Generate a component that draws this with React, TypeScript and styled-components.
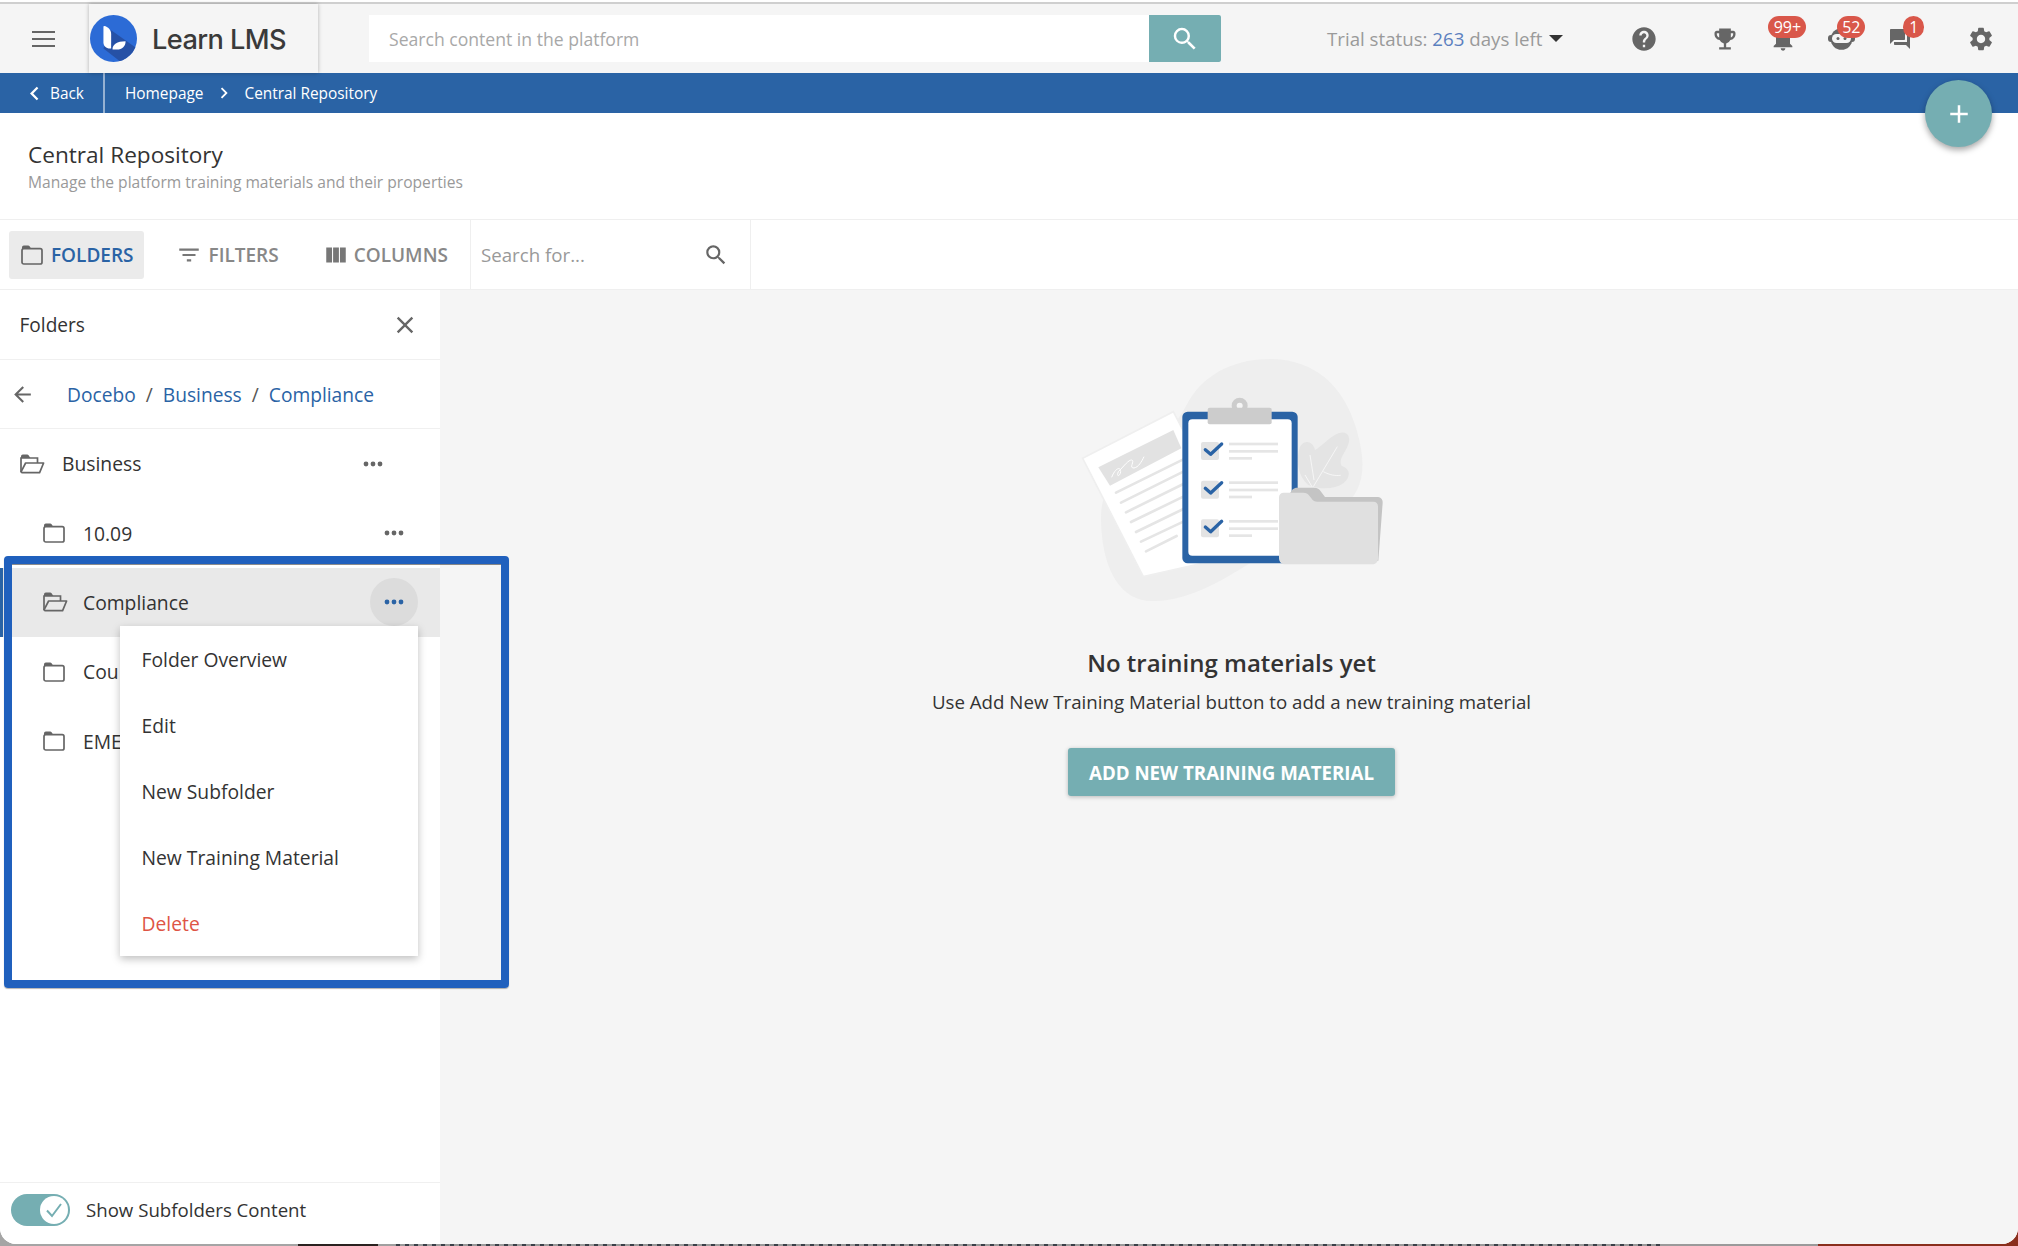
import React from "react";
import styled, { createGlobalStyle } from "styled-components";
import {
  MdHelp,
  MdEmojiEvents,
  MdNotifications,
  MdQuestionAnswer,
  MdSettings,
  MdSearch,
  MdFilterList,
  MdViewColumn,
  MdClose,
  MdArrowBack,
  MdAdd,
  MdChevronLeft,
  MdChevronRight,
} from "react-icons/md";

const BLUE = "#2a63a5";
const TEAL = "#75aeb2";
const INK = "#333333";
const ICON = "#666666";

const Global = createGlobalStyle`
  html, body { margin: 0; padding: 0; background: #fff; }
  * { box-sizing: border-box; }
  body { font-family: "Open Sans", "Liberation Sans", sans-serif; color: ${INK}; }
`;

const Root = styled.div`
  position: relative;
  width: 2018px;
  height: 1246px;
  overflow: hidden;
  background:
    linear-gradient(90deg, #a5a5a5 0 298px, #2a2220 298px 378px, #a0a0a0 378px 395px, transparent 395px 1660px, #9a9a9a 1660px 1818px, #8a2e1c 1818px),
    repeating-linear-gradient(90deg, #3a4048 0 4px, #9a9a9a 4px 9px);
`;

const Main = styled.div`
  position: relative;
  height: 1244px;
  display: flex;
  flex-direction: column;
  background: #fff;
  border-radius: 0 0 16px 16px;
  overflow: hidden;
  padding-top: 2px;
`;

const TopRule = styled.div`
  flex: none;
  height: 2px;
  background: #cfcfcf;
`;

const Header = styled.header`
  flex: none;
  height: 69px;
  display: flex;
  align-items: center;
  background: #f5f5f5;
`;

const MenuSlot = styled.div`
  width: 89px;
  height: 100%;
  display: flex;
  align-items: center;
  justify-content: center;
  padding-right: 2px;
`;

const Burger = styled.span`
  display: block;
  width: 23px;
  height: 16px;
  border-top: 2px solid ${ICON};
  border-bottom: 2px solid ${ICON};
  position: relative;
  &::after {
    content: "";
    position: absolute;
    left: 0;
    right: 0;
    top: 5px;
    height: 2px;
    background: ${ICON};
  }
`;

const LogoBox = styled.div`
  position: relative;
  z-index: 2;
  width: 229px;
  height: 100%;
  display: flex;
  align-items: center;
  gap: 15px;
  padding-left: 1px;
  background: #f5f5f5;
  box-shadow: 0 0 4px rgba(0, 0, 0, 0.28);
`;

const LogoText = styled.span`
  font-family: Inter, "Open Sans", sans-serif;
  font-weight: 500;
  font-size: 27.2px;
  letter-spacing: -0.6px;
  color: #3a3a3a;
  line-height: 1;
  padding-top: 3px;
`;

const SearchBar = styled.div`
  margin-left: 51px;
  width: 852px;
  height: 47px;
  display: flex;
  background: #fff;
`;

const SearchText = styled.span`
  flex: 1;
  display: flex;
  align-items: center;
  padding-left: 20px;
  font-size: 17.6px;
  color: #a8a8a8;
`;

const SearchButton = styled.div`
  width: 72px;
  display: flex;
  align-items: center;
  justify-content: center;
  background: ${TEAL};
  border-radius: 0 2px 2px 0;
  color: #fff;
  font-size: 30px;
`;

const Trial = styled.div`
  margin-left: 106px;
  display: flex;
  align-items: center;
  font-size: 18.7px;
  color: #9a9a9a;
  white-space: pre;
`;

const TrialDays = styled.span`
  color: #5b80bf;
`;

const Caret = styled.span`
  margin-left: 7px;
  width: 0;
  height: 0;
  border-left: 7px solid transparent;
  border-right: 7px solid transparent;
  border-top: 7px solid #333;
`;

const HeaderIcons = styled.div`
  display: flex;
  align-items: center;
  margin-left: 67px;
`;

const IconSlot = styled.div<{ $gap: number }>`
  position: relative;
  width: 28px;
  height: 28px;
  margin-left: ${(p) => p.$gap}px;
  display: flex;
  align-items: center;
  justify-content: center;
  color: ${ICON};
  font-size: 28px;
`;

const Badge = styled.span<{ $left: number; $width: number }>`
  position: absolute;
  left: ${(p) => p.$left}px;
  top: -9px;
  width: ${(p) => p.$width}px;
  height: 22px;
  border-radius: 11px;
  background: #d9574a;
  color: #fff;
  font-size: 16px;
  line-height: 22px;
  text-align: center;
`;

const NavBar = styled.nav`
  flex: none;
  height: 40px;
  display: flex;
  align-items: center;
  background: ${BLUE};
  color: #fff;
  font-size: 15.4px;
  font-weight: 500;
`;

const BackLink = styled.div`
  width: 105px;
  height: 100%;
  display: flex;
  align-items: center;
  padding-left: 21px;
  border-right: 2px solid rgba(255, 255, 255, 0.5);
  svg { font-size: 27px; margin-right: 2px; }
`;

const Crumbs = styled.div`
  display: flex;
  align-items: center;
  padding-left: 20px;
  svg { font-size: 22px; margin: 0 9.5px; }
`;

const Fab = styled.div`
  position: absolute;
  z-index: 5;
  left: 1925px;
  top: 80px;
  width: 67px;
  height: 67px;
  border-radius: 50%;
  background: ${TEAL};
  color: #fff;
  font-size: 30px;
  display: flex;
  align-items: center;
  justify-content: center;
  box-shadow: 0 3px 6px rgba(0, 0, 0, 0.35);
`;

const TitleBlock = styled.section`
  flex: none;
  height: 106px;
  padding: 27px 28px 0;
`;

const PageTitle = styled.h1`
  margin: 0;
  font-size: 22.6px;
  line-height: 30px;
  font-weight: 500;
  color: #333;
`;

const PageSub = styled.p`
  margin: 2px 0 0;
  font-size: 15.6px;
  line-height: 20px;
  color: #999;
`;

const Toolbar = styled.div`
  flex: none;
  height: 71px;
  display: flex;
  align-items: center;
  padding-left: 9px;
  border-top: 1px solid #efefef;
  border-bottom: 1px solid #efefef;
`;

const ToolButton = styled.div<{ $active?: boolean; $ml?: number; $iconGap?: number }>`
  display: flex;
  align-items: center;
  height: 48px;
  gap: ${(p) => p.$iconGap ?? 8}px;
  margin-left: ${(p) => p.$ml ?? 0}px;
  padding: ${(p) => (p.$active ? "0 10px 0 12px" : "0")};
  border-radius: 3px;
  background: ${(p) => (p.$active ? "#ebebeb" : "transparent")};
  color: ${(p) => (p.$active ? BLUE : "#888")};
  font-size: 19px;
  font-weight: 600;
  svg { flex: none; color: ${(p) => (p.$active ? ICON : "#777")}; }
`;

const FilterGlyph = styled(MdFilterList)`
  margin: 0 -3px;
`;

const ColumnsGlyph = styled(MdViewColumn)`
  margin: 0 -3px;
`;

const ToolSearch = styled.div`
  margin-left: 22px;
  width: 281px;
  height: 100%;
  display: flex;
  align-items: center;
  justify-content: space-between;
  padding: 0 21px 0 10px;
  border-left: 1px solid #efefef;
  border-right: 1px solid #efefef;
  font-size: 18.7px;
  color: #999;
  svg { font-size: 26px; color: ${ICON}; }
`;

const Body = styled.div`
  position: relative;
  flex: 1;
  min-height: 0;
  display: flex;
`;

const Sidebar = styled.aside`
  width: 440px;
  flex: none;
  display: flex;
  flex-direction: column;
  background: #fff;
`;

const SideHead = styled.div`
  flex: none;
  height: 70px;
  display: flex;
  align-items: center;
  justify-content: space-between;
  padding: 0 21px 0 19.5px;
  border-bottom: 1px solid #f0f0f0;
  font-size: 19.1px;
  font-weight: 500;
  svg { font-size: 28px; color: ${ICON}; }
`;

const SidePath = styled.div`
  flex: none;
  height: 69px;
  display: flex;
  align-items: center;
  padding-left: 10px;
  border-bottom: 1px solid #f0f0f0;
  font-size: 19.2px;
  color: ${BLUE};
  svg { font-size: 25px; color: ${ICON}; margin-right: 32px; }
`;

const Slash = styled.span`
  margin: 0 10px;
  color: #555;
`;

const FolderList = styled.div`
  flex: 1;
  min-height: 0;
`;

const FolderRow = styled.div<{ $nested?: boolean; $selected?: boolean }>`
  position: relative;
  height: 69.4px;
  display: flex;
  align-items: center;
  padding-left: ${(p) => (p.$nested ? 43 : 20)}px;
  padding-right: ${(p) => (p.$nested ? 22 : 43)}px;
  background: ${(p) => (p.$selected ? "#e9e9e9" : "transparent")};
  font-size: 19.3px;
  font-weight: 500;
  color: ${INK};
  &::before {
    content: ${(p) => (p.$selected ? '""' : "none")};
    position: absolute;
    left: 0;
    top: 0;
    bottom: 0;
    width: 3px;
    background: ${BLUE};
  }
`;

const FolderLabel = styled.span<{ $ml: number }>`
  flex: 1;
  margin-left: ${(p) => p.$ml}px;
`;

const DotsButton = styled.div<{ $active?: boolean }>`
  width: 48px;
  height: 48px;
  border-radius: 50%;
  display: flex;
  align-items: center;
  justify-content: center;
  background: ${(p) => (p.$active ? "#dcdcdc" : "transparent")};
  color: ${(p) => (p.$active ? BLUE : ICON)};
`;

const ActionMenu = styled.ul`
  position: absolute;
  z-index: 3;
  left: 120px;
  top: 58px;
  width: 298px;
  height: 330px;
  margin: 0;
  padding: 1px 0 0;
  list-style: none;
  background: #fff;
  box-shadow: 0 3px 8px rgba(0, 0, 0, 0.25);
`;

const ActionItem = styled.li<{ $danger?: boolean }>`
  height: 66px;
  display: flex;
  align-items: center;
  padding-left: 21.5px;
  font-size: 19.3px;
  font-weight: 500;
  color: ${(p) => (p.$danger ? "#de5445" : INK)};
`;

const SideFoot = styled.div`
  flex: none;
  height: 62px;
  display: flex;
  align-items: center;
  gap: 16px;
  padding: 0 0 7px 11px;
  border-top: 1px solid #f0f0f0;
  font-size: 18.65px;
  color: ${INK};
`;

const FootLabel = styled.span`
  margin-top: -2px;
`;

const Toggle = styled.span`
  position: relative;
  width: 59px;
  height: 32px;
  border-radius: 16px;
  background: ${TEAL};
`;

const ToggleKnob = styled.span`
  position: absolute;
  right: 2px;
  top: 2px;
  width: 28px;
  height: 28px;
  border-radius: 50%;
  background: #fff;
  display: flex;
  align-items: center;
  justify-content: center;
`;

const Content = styled.main`
  flex: 1;
  min-width: 0;
  display: flex;
  flex-direction: column;
  align-items: center;
  padding: 50px 0 0 5px;
  background: #f5f5f5;
`;

const EmptyArt = styled.svg`
  display: block;
  width: 340px;
  height: 280px;
  margin-left: -3px;
`;

const EmptyTitle = styled.h2`
  margin: 26px 0 0;
  font-size: 24px;
  line-height: 34px;
  font-weight: 600;
  color: #333;
`;

const EmptyText = styled.p`
  margin: 9px 0 0;
  font-size: 18.7px;
  line-height: 26px;
  color: #333;
`;

const AddButton = styled.div`
  margin-top: 33px;
  width: 327px;
  height: 48px;
  display: flex;
  align-items: center;
  justify-content: center;
  border-radius: 3px;
  background: ${TEAL};
  color: #fff;
  font-size: 18.7px;
  font-weight: 700;
  box-shadow: 0 1px 4px rgba(0, 0, 0, 0.25);
`;

const Highlight = styled.div`
  position: absolute;
  z-index: 4;
  left: 4px;
  top: 266px;
  width: 505px;
  height: 432px;
  border: 8px solid #2060bd;
  border-radius: 4px;
  pointer-events: none;
  box-shadow: inset 0 1px 0 rgba(0, 0, 0, 0.45), 0 1px 1px rgba(0, 0, 0, 0.3);
`;

const FolderGlyph = styled.svg`
  flex: none;
`;

const Dots = () => (
  <svg width="20" height="6" viewBox="0 0 20 6" fill="currentColor">
    <circle cx="3" cy="3" r="2.4" />
    <circle cx="10" cy="3" r="2.4" />
    <circle cx="17" cy="3" r="2.4" />
  </svg>
);

const FolderClosed = () => (
  <FolderGlyph width="22" height="20" viewBox="0 0 22 20">
    <path d="M1 5V2.5C1 1.4 1.8.6 2.8.6h4.4c.6 0 1 .2 1.4.7L10.4 4H1z" fill={ICON} />
    <rect x="1" y="3.6" width="20" height="15.4" rx="1.8" fill="none" stroke={ICON} strokeWidth="1.7" />
  </FolderGlyph>
);

const FolderOpen = () => (
  <FolderGlyph width="25" height="20" viewBox="0 0 25 20">
    <path d="M1 5V2.5C1 1.4 1.8.6 2.8.6h4.4c.6 0 1 .2 1.4.7L10.4 4H1z" fill={ICON} />
    <path d="M1 18V4h16.5v5" fill="none" stroke={ICON} strokeWidth="1.7" />
    <path d="M5.6 9H23.6L19.6 18.6H2.2C1.4 18.6 1 18 1.3 17.3z" fill="none" stroke={ICON} strokeWidth="1.7" strokeLinejoin="round" />
  </FolderGlyph>
);

const LogoMark = () => (
  <svg width="47" height="47" viewBox="0 0 140 140">
    <defs>
      <clipPath id="logoClip">
        <circle cx="70" cy="70" r="70" />
      </clipPath>
    </defs>
    <circle cx="70" cy="70" r="70" fill="#2c6bd6" />
    <path d="M62 45L140 100V140H92L40 100z" fill="#2651a6" clipPath="url(#logoClip)" />
    <path d="M42 33C54 35 63 45 63 57V100H59C48 100 40 92 40 82V35C40 33.5 41 33 42 33z" fill="#fff" />
    <path d="M67 102C67 88 80 78 106 78C106 93 96 103 80 103H68z" fill="#fff" />
  </svg>
);

const BotIcon = () => (
  <svg width="27" height="22" viewBox="0 0 27 22">
    <circle cx="13.5" cy="11" r="10.8" fill={ICON} />
    <rect x="0" y="7" width="27" height="7" rx="3" fill={ICON} />
    <rect x="4" y="6" width="19" height="9" rx="4.5" fill="#f5f5f5" />
    <circle cx="10" cy="10.5" r="1.5" fill={ICON} />
    <circle cx="17" cy="10.5" r="1.5" fill={ICON} />
  </svg>
);

const Illustration = () => (
  <EmptyArt viewBox="0 0 1020 840">
    <path
      d="M385 185C440 90 540 55 640 57C760 62 850 130 890 270C925 390 910 470 820 520C720 575 620 640 520 700C430 755 340 790 260 782C170 772 125 670 123 540C122 470 145 430 190 400C270 350 340 270 385 185z"
      fill="#eeeeee"
    />
    <path d="M720 320C735 296 760 305 765 330C785 320 810 290 835 280C865 270 875 295 862 320C850 345 835 360 845 378C870 385 875 410 850 430C825 448 780 450 745 435C715 410 705 360 720 320z" fill="#e4e4e4" />
    <path d="M832 320L760 440M750 345L762 420M735 405L756 440M790 395C810 405 825 408 842 406" fill="none" stroke="#fff" strokeWidth="2" />
    <polygon points="68,355 340,215 560,640 250,710" fill="#ffffff" stroke="#efefef" strokeWidth="5" />
    <polygon points="115,382 340,270 364,325 150,437" fill="#e2e2e2" />
    <path d="M155 412C165 385 182 378 182 395C180 410 168 412 175 395C195 375 205 360 215 360C226 362 205 385 222 384C235 382 245 365 252 350" fill="none" stroke="#fff" strokeWidth="3" />
    <g stroke="#e5e5e5" strokeWidth="8" strokeLinecap="round">
      <line x1="168" y1="458" x2="370" y2="358" />
      <line x1="183" y1="488" x2="370" y2="395" />
      <line x1="198" y1="517" x2="370" y2="432" />
      <line x1="213" y1="546" x2="370" y2="470" />
      <line x1="228" y1="576" x2="370" y2="507" />
      <line x1="243" y1="605" x2="370" y2="545" />
      <line x1="258" y1="634" x2="350" y2="588" />
    </g>
    <rect x="367" y="215" width="346" height="455" rx="16" fill={BLUE} />
    <rect x="385" y="238" width="310" height="409" rx="12" fill="#fff" />
    <circle cx="539" cy="197" r="24" fill="#cccccc" />
    <circle cx="539" cy="197" r="9" fill="#f5f5f5" />
    <rect x="443" y="203" width="192" height="50" rx="6" fill="#cccccc" />
    {[0, 116, 232].map((dy) => (
      <g key={dy} transform={`translate(0 ${dy})`}>
        <rect x="423" y="306" width="54" height="54" rx="6" fill="#e3e3e3" />
        <path d="M436 329L452 343L485 312" fill="none" stroke={BLUE} strokeWidth="10" strokeLinecap="round" strokeLinejoin="round" />
        <rect x="507" y="308" width="147" height="8" fill="#e5e5e5" />
        <rect x="507" y="330" width="147" height="8" fill="#e5e5e5" />
        <rect x="507" y="351" width="69" height="8" fill="#e5e5e5" />
      </g>
    ))}
    <path d="M690 460C695 450 700 443 712 443H762C772 443 778 447 782 454L795 471H950C962 471 968 477 968 488L955 662L690 662z" fill="#c4c4c4" />
    <path d="M657 472C657 464 663 458 671 458H730C738 458 744 461 748 467L758 480C762 484 766 485 771 485H940C949 485 954 490 954 499V655C954 665 948 673 938 673H675C664 673 657 665 657 654z" fill="#e0e0e0" />
  </EmptyArt>
);

export default function App() {
  return (
    <Root>
      <Global />
      <Main>
        <TopRule />
        <Header>
          <MenuSlot>
            <Burger />
          </MenuSlot>
          <LogoBox>
            <LogoMark />
            <LogoText>Learn LMS</LogoText>
          </LogoBox>
          <SearchBar>
            <SearchText>Search content in the platform</SearchText>
            <SearchButton>
              <MdSearch />
            </SearchButton>
          </SearchBar>
          <Trial>
            Trial status: <TrialDays>263</TrialDays> days left
            <Caret />
          </Trial>
          <HeaderIcons>
            <IconSlot $gap={0}>
              <MdHelp />
            </IconSlot>
            <IconSlot $gap={53}>
              <MdEmojiEvents />
            </IconSlot>
            <IconSlot $gap={30}>
              <MdNotifications />
              <Badge $left={-1} $width={38}>99+</Badge>
            </IconSlot>
            <IconSlot $gap={30}>
              <BotIcon />
              <Badge $left={10} $width={28}>52</Badge>
            </IconSlot>
            <IconSlot $gap={31}>
              <MdQuestionAnswer size={24} />
              <Badge $left={17} $width={21}>1</Badge>
            </IconSlot>
            <IconSlot $gap={53}>
              <MdSettings />
            </IconSlot>
          </HeaderIcons>
        </Header>
        <NavBar>
          <BackLink>
            <MdChevronLeft />
            Back
          </BackLink>
          <Crumbs>
            Homepage
            <MdChevronRight />
            Central Repository
          </Crumbs>
        </NavBar>
        <Fab>
          <MdAdd />
        </Fab>
        <TitleBlock>
          <PageTitle>Central Repository</PageTitle>
          <PageSub>Manage the platform training materials and their properties</PageSub>
        </TitleBlock>
        <Toolbar>
          <ToolButton $active>
            <FolderClosed />
            FOLDERS
          </ToolButton>
          <ToolButton $ml={35} $iconGap={10}>
            <FilterGlyph size={26} />
            FILTERS
          </ToolButton>
          <ToolButton $ml={47} $iconGap={8}>
            <ColumnsGlyph size={26} />
            COLUMNS
          </ToolButton>
          <ToolSearch>
            Search for...
            <MdSearch />
          </ToolSearch>
        </Toolbar>
        <Body>
          <Sidebar>
            <SideHead>
              Folders
              <MdClose />
            </SideHead>
            <SidePath>
              <MdArrowBack />
              Docebo
              <Slash>/</Slash>
              Business
              <Slash>/</Slash>
              Compliance
            </SidePath>
            <FolderList>
              <FolderRow>
                <FolderOpen />
                <FolderLabel $ml={17}>Business</FolderLabel>
                <DotsButton>
                  <Dots />
                </DotsButton>
              </FolderRow>
              <FolderRow $nested>
                <FolderClosed />
                <FolderLabel $ml={18}>10.09</FolderLabel>
                <DotsButton>
                  <Dots />
                </DotsButton>
              </FolderRow>
              <FolderRow $nested $selected>
                <FolderOpen />
                <FolderLabel $ml={15}>Compliance</FolderLabel>
                <DotsButton $active>
                  <Dots />
                </DotsButton>
                <ActionMenu>
                  <ActionItem>Folder Overview</ActionItem>
                  <ActionItem>Edit</ActionItem>
                  <ActionItem>New Subfolder</ActionItem>
                  <ActionItem>New Training Material</ActionItem>
                  <ActionItem $danger>Delete</ActionItem>
                </ActionMenu>
              </FolderRow>
              <FolderRow $nested>
                <FolderClosed />
                <FolderLabel $ml={18}>Cou</FolderLabel>
              </FolderRow>
              <FolderRow $nested>
                <FolderClosed />
                <FolderLabel $ml={18}>EME</FolderLabel>
              </FolderRow>
            </FolderList>
            <SideFoot>
              <Toggle>
                <ToggleKnob>
                  <svg width="18" height="16" viewBox="0 0 18 16">
                    <path d="M2 8.5L7 14L16 2" fill="none" stroke={TEAL} strokeWidth="2" />
                  </svg>
                </ToggleKnob>
              </Toggle>
              <FootLabel>Show Subfolders Content</FootLabel>
            </SideFoot>
          </Sidebar>
          <Content>
            <Illustration />
            <EmptyTitle>No training materials yet</EmptyTitle>
            <EmptyText>Use Add New Training Material button to add a new training material</EmptyText>
            <AddButton>ADD NEW TRAINING MATERIAL</AddButton>
          </Content>
          <Highlight />
        </Body>
      </Main>
    </Root>
  );
}
